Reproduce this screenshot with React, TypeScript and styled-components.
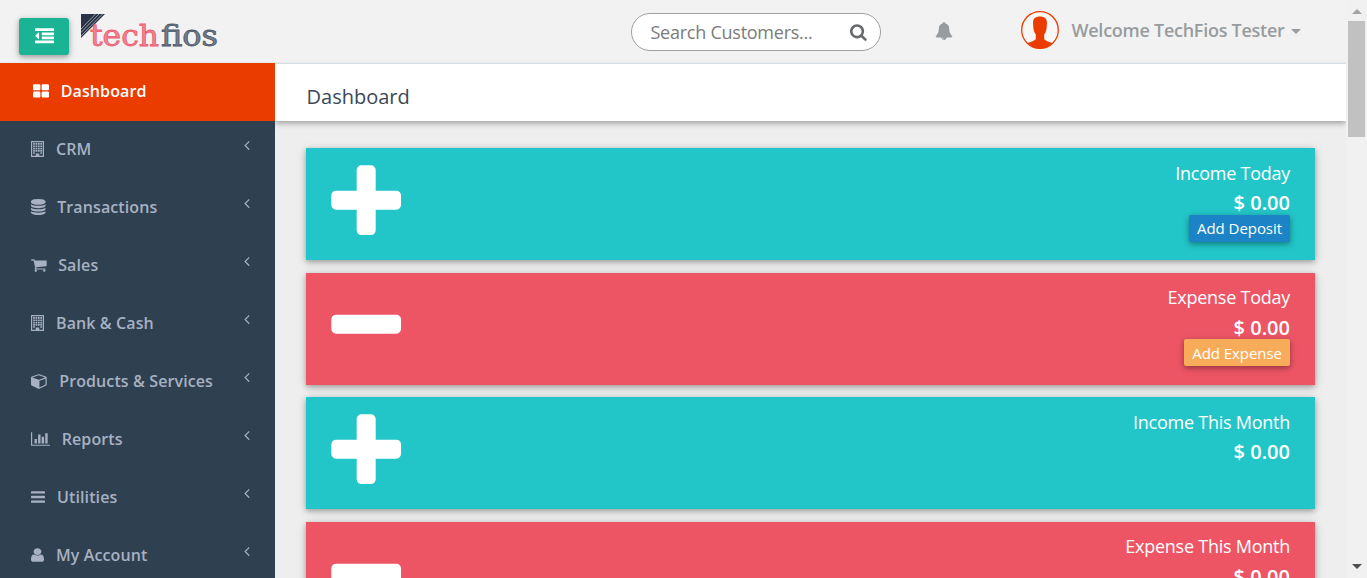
import React from "react";
import styled, { createGlobalStyle } from "styled-components";

const GlobalStyle = createGlobalStyle`
  * { box-sizing: border-box; }
  body {
    margin: 0;
    overflow: hidden;
    background: #eeeeee;
    font-family: "Open Sans", "Noto Sans", sans-serif;
  }
  button, input { font-family: inherit; }
`;

const Screen = styled.div`
  display: flex;
  width: 1367px;
  height: 578px;
  overflow: hidden;
`;

const Page = styled.div`
  display: flex;
  flex-direction: column;
  width: 1346px;
  height: 578px;
`;

const Header = styled.header`
  display: flex;
  align-items: flex-start;
  flex: none;
  height: 63px;
  border-bottom: 1px solid #e7ebed;
  background: #f2f2f2;
`;

const ToggleButton = styled.button`
  display: flex;
  align-items: center;
  justify-content: center;
  width: 50px;
  height: 37px;
  margin: 18px 0 0 19px;
  padding: 0;
  border: 0;
  border-radius: 3px;
  background: #1ab394;
  color: #fff;
  box-shadow: 0 2px 5px rgba(0, 0, 0, 0.26), 0 2px 8px rgba(0, 0, 0, 0.14);
`;

const Logo = styled.svg`
  flex: none;
  width: 140px;
  height: 40px;
  margin: 12px 0 0 11px;
`;

const SearchBox = styled.label`
  display: flex;
  align-items: center;
  width: 250px;
  height: 38px;
  margin: 13px 0 0 411px;
  padding: 0 13px 0 18.5px;
  border: 1px solid #a0a0a0;
  border-radius: 19px;
  background: #fff;
  color: #676a6c;
`;

const SearchInput = styled.input`
  flex: 1;
  min-width: 0;
  padding: 0;
  border: 0;
  outline: 0;
  background: transparent;
  font-size: 18px;
  letter-spacing: -0.25px;
  &::placeholder { color: #7b7b7b; opacity: 1; }
`;

const BellSlot = styled.div`
  display: flex;
  margin: 22px 0 0 54px;
  color: #999c9e;
`;

const Avatar = styled.svg`
  width: 38px;
  height: 38px;
  margin: 11px 0 0 68px;
`;

const Welcome = styled.div`
  display: flex;
  align-items: center;
  gap: 6px;
  height: 24px;
  margin: 18px 0 0 12.5px;
  color: #999c9e;
  font-size: 18px;
  font-weight: 600;
  letter-spacing: -0.26px;
  white-space: nowrap;
`;

const Caret = styled.span`
  margin-top: 2px;
  border-top: 5px solid #999c9e;
  border-left: 5px solid transparent;
  border-right: 5px solid transparent;
`;

const Body = styled.div`
  display: flex;
  flex: 1;
  min-height: 0;
`;

const Sidebar = styled.nav`
  flex: none;
  width: 275px;
  background: #2f4050;
`;

const MenuItem = styled.a<{ $active?: boolean }>`
  display: flex;
  align-items: center;
  height: 58px;
  padding: 0 25px 2px ${(p) => (p.$active ? 33 : 31)}px;
  background: ${(p) => (p.$active ? "#eb3c00" : "transparent")};
  color: ${(p) => (p.$active ? "#fff" : "#a7b1c2")};
  font-size: 16px;
  font-weight: 600;
  letter-spacing: 0.11px;
  white-space: nowrap;
`;

const MenuText = styled.span<{ $gap: number }>`
  flex: 1;
  margin-left: ${(p) => p.$gap}px;
`;

const Arrow = styled.span`
  display: flex;
  padding-bottom: 7.5px;
`;

const Main = styled.main`
  display: flex;
  flex: 1;
  flex-direction: column;
  min-width: 0;
  background: #eeeeee;
  overflow: hidden;
`;

const TitleBar = styled.div`
  flex: none;
  height: 58px;
  padding: 20px 31.5px 0;
  border-top: 1px solid #d8dfe3;
  background: #fff;
  box-shadow: 0 2px 6px rgba(0, 0, 0, 0.36);
`;

const Title = styled.h1`
  margin: 0;
  color: #3b4757;
  font-size: 20px;
  font-weight: 400;
  line-height: 26px;
`;

const Cards = styled.div`
  display: flex;
  flex-direction: column;
  gap: 12.5px;
  padding: 27px 31px 0;
`;

const Card = styled.section<{ $tone: string }>`
  display: flex;
  justify-content: space-between;
  flex: none;
  height: 112px;
  padding: 10.8px 25px 0 19px;
  background: ${(p) => p.$tone};
  color: #fff;
  box-shadow: 0 2px 5px rgba(0, 0, 0, 0.26), 0 2px 10px rgba(0, 0, 0, 0.14);
`;

const Figures = styled.div`
  display: flex;
  flex-direction: column;
  align-items: flex-end;
  padding-top: 1px;
`;

const CardLabel = styled.span`
  font-size: 18px;
  line-height: 26px;
  letter-spacing: -0.25px;
`;

const Amount = styled.strong`
  margin-top: 4.6px;
  font-size: 20px;
  font-weight: 600;
  line-height: 26px;
`;

const CardButton = styled.button<{ $tone: string }>`
  height: 27px;
  margin-top: -1.6px;
  padding: 0.6px 8px 0;
  border: 0;
  border-radius: 2px;
  background: ${(p) => p.$tone};
  color: #fff;
  font-size: 15px;
  line-height: 26.4px;
  letter-spacing: -0.05px;
  box-shadow: 0 2px 5px rgba(0, 0, 0, 0.26), 0 2px 8px rgba(0, 0, 0, 0.16);
`;

const ScrollTrack = styled.div`
  display: flex;
  flex-direction: column;
  align-items: center;
  width: 21px;
  height: 578px;
  background: #f1f1f1;
`;

const ScrollArrow = styled.span<{ $down?: boolean }>`
  border-left: 5px solid transparent;
  border-right: 5px solid transparent;
  ${(p) =>
    p.$down
      ? "margin-top: auto; margin-bottom: 9px; border-top: 5px solid #505050;"
      : "margin-top: 9px; border-bottom: 5px solid #a3a3a3;"}
`;

const ScrollThumb = styled.span`
  width: 17px;
  height: 116px;
  margin-top: 7px;
  background: #c1c1c1;
`;

type Glyph = { x?: number; w: number; d: string };

const glyphs: Record<string, Glyph> = {
  dedent: {
    w: 1792,
    d: "M384 544v576q0 13-9.500 22.500t-22.500 9.500q-14 0-23-9l-288-288q-9-9-9-23t9-23l288-288q9-9 23-9 13 0 22.500 9.500t9.500 22.500zM32 1280h1728q32 0 32 32v192q0 32-32 32h-1728q-32 0-32-32v-192q0-32 32-32zM672 896h1088q32 0 32 32v192q0 32-32 32h-1088q-32 0-32-32v-192q0-32 32-32zM672 512h1088q32 0 32 32v192q0 32-32 32h-1088q-32 0-32-32v-192q0-32 32-32zM32 128h1728q32 0 32 32v192q0 32-32 32h-1728q-32 0-32-32v-192q0-32 32-32z",
  },
  grid: {
    x: 64,
    w: 1664,
    d: "M832 1024v384q0 52-38 90t-90 38h-512q-52 0-90-38t-38-90v-384q0-52 38-90t90-38h512q52 0 90 38t38 90zm0-768v384q0 52-38 90t-90 38h-512q-52 0-90-38t-38-90v-384q0-52 38-90t90-38h512q52 0 90 38t38 90zm896 768v384q0 52-38 90t-90 38h-512q-52 0-90-38t-38-90v-384q0-52 38-90t90-38h512q52 0 90 38t38 90zm0-768v384q0 52-38 90t-90 38h-512q-52 0-90-38t-38-90v-384q0-52 38-90t90-38h512q52 0 90 38t38 90z",
  },
  building: {
    w: 1408,
    d: "M64 0h1280q64 0 64 64v1664q0 64-64 64H64q-64 0-64-64V64Q0 0 64 0zM128 128v1536h384v-224q0-32 32-32h320q32 0 32 32v224h384V128z" +
      [230, 490, 750, 1010]
        .map((y) => [230, 490, 750, 1010].map((x) => `M${x} ${y}h190v190h-190z`).join(""))
        .join("") +
      "M230 1270h190v150h-190zM1010 1270h190v150h-190z",
  },
  database: {
    x: 128,
    w: 1536,
    d: "M896 768q237 0 443-43t325-127v170q0 69-103 128t-280 93.500-385 34.500-385-34.500-280-93.500-103-128v-170q119 84 325 127t443 43zm0 768q237 0 443-43t325-127v170q0 69-103 128t-280 93.500-385 34.500-385-34.500-280-93.500-103-128v-170q119 84 325 127t443 43zm0-384q237 0 443-43t325-127v170q0 69-103 128t-280 93.500-385 34.500-385-34.500-280-93.500-103-128v-170q119 84 325 127t443 43zm0-1152q208 0 385 34.500t280 93.500 103 128v128q0 69-103 128t-280 93.500-385 34.500-385-34.500-280-93.500-103-128v-128q0-69 103-128t280-93.500 385-34.500z",
  },
  cart: {
    x: 64,
    w: 1664,
    d: "M704 1536q0 52-38 90t-90 38-90-38-38-90 38-90 90-38 90 38 38 90zm896 0q0 52-38 90t-90 38-90-38-38-90 38-90 90-38 90 38 38 90zm128-1088v512q0 24-16.500 42.500t-40.500 21.500l-1044 122q13 60 13 70 0 16-24 64h920q26 0 45 19t19 45-19 45-45 19h-1024q-26 0-45-19t-19-45q0-11 8-31.500t16-36 21.500-40 15.500-29.500l-177-823h-204q-26 0-45-19t-19-45 19-45 45-19h256q16 0 28.500 6.500t19.500 15.500 13 24.500 8 26 5.500 29.500 4.500 26h1201q26 0 45 19t19 45z",
  },
  cube: {
    w: 1664,
    d: "M896 1629l640-349v-636l-640 233v752zm-64-865l698-254-698-254-698 254zm832-252v768q0 35-18 65t-49 47l-704 384q-28 16-61 16t-61-16l-704-384q-31-17-49-47t-18-65v-768q0-40 23-73t61-47l704-256q22-8 44-8t44 8l704 256q38 14 61 47t23 73z",
  },
  chart: {
    w: 2048,
    d: "M640 896v512h-256v-512h256zm384-512v1024h-256v-1024h256zm1024 1152v128h-2048v-1536h128v1408h1920zm-640-896v768h-256v-768h256zm384-384v1152h-256v-1152h256z",
  },
  lines: {
    w: 1536,
    d: "M64 256h1408q64 0 64 64v128q0 64-64 64H64q-64 0-64-64V320q0-64 64-64zM64 768h1408q64 0 64 64v128q0 64-64 64H64q-64 0-64-64V832q0-64 64-64zM64 1280h1408q64 0 64 64v128q0 64-64 64H64q-64 0-64-64v-128q0-64 64-64z",
  },
  user: {
    x: 256,
    w: 1280,
    d: "M1536 1399q0 109-62.500 187t-150.500 78h-854q-88 0-150.500-78t-62.500-187q0-85 8.500-160.500t31.500-152 58.500-131 94-89 134.500-34.500q131 128 313 128t313-128q76 0 134.500 34.500t94 89 58.500 131 31.500 152 8.500 160.500zm-256-887q0 159-112.500 271.500t-271.500 112.500-271.500-112.500-112.500-271.500 112.500-271.500 271.500-112.500 271.500 112.500 112.500 271.500z",
  },
  search: {
    x: 64,
    w: 1664,
    d: "M1216 832q0-185-131.500-316.500t-316.500-131.500-316.500 131.500-131.500 316.500 131.500 316.500 316.500 131.500 316.500-131.500 131.500-316.500zm512 832q0 52-38 90t-90 38q-54 0-90-38l-343-342q-179 124-399 124-143 0-273.500-55.500t-225-150-150-225-55.500-273.500 55.500-273.500 150-225 225-150 273.500-55.500 273.500 55.500 225 150 150 225 55.500 273.500q0 220-124 399l343 343q37 37 37 90z",
  },
  bell: {
    w: 1792,
    d: "M912 1696q0-16-16-16-59 0-101.500-42.500t-42.500-101.500q0-16-16-16t-16 16q0 73 51.500 124.500t124.500 51.500q16 0 16-16zm816-288q0 52-38 90t-90 38h-448q0 106-75 181t-181 75-181-75-75-181h-448q-52 0-90-38t-38-90q50-42 91-88t85-119.500 74.500-158.500 50-206 19.500-260q0-152 117-282.500t307-158.500q-8-19-8-39 0-40 28-68t68-28 68 28 28 68q0 20-8 39 190 28 307 158.500t117 282.500q0 139 19.500 260t50 206 74.500 158.500 85 119.500 91 88z",
  },
  plus: {
    x: 64,
    w: 1664,
    d: "M1600 736v192q0 40-28 68t-68 28h-416v416q0 40-28 68t-68 28h-192q-40 0-68-28t-28-68v-416h-416q-40 0-68-28t-28-68v-192q0-40 28-68t68-28h416v-416q0-40 28-68t68-28h192q40 0 68 28t28 68v416h416q40 0 68 28t28 68z",
  },
  minus: {
    x: 64,
    w: 1664,
    d: "M1600 736v192q0 40-28 68t-68 28h-1216q-40 0-68-28t-28-68v-192q0-40 28-68t68-28h1216q40 0 68 28t28 68z",
  },
  angle: {
    x: 576,
    w: 640,
    d: "M1203 544q0 13-10 23l-393 393 393 393q10 10 10 23t-10 23l-50 50q-10 10-23 10t-23-10l-466-466q-10-10-10-23t10-23l466-466q10-10 23-10t23 10l50 50q10 10 10 23z",
  },
};

const Icon = ({ name, size, width }: { name: string; size: number; width?: number }) => {
  const g = glyphs[name];
  return (
    <svg
      width={width ?? (g.w / 1792) * size}
      height={size}
      viewBox={`${g.x ?? 0} 0 ${g.w} 1792`}
      preserveAspectRatio="none"
      fill="currentColor"
      fillRule={name === "building" ? "evenodd" : "nonzero"}
    >
      <path d={g.d} />
    </svg>
  );
};

const menu = [
  { label: "Dashboard", icon: "grid", width: 16, size: 17, gap: 11.7, active: true },
  { label: "CRM", icon: "building", width: 13, gap: 12 },
  { label: "Transactions", icon: "database", width: 14.5, gap: 11.7 },
  { label: "Sales", icon: "cart", width: 15.7, gap: 11.5 },
  { label: "Bank & Cash", icon: "building", width: 13, gap: 12 },
  { label: "Products & Services", icon: "cube", width: 15.7, gap: 12.5 },
  { label: "Reports", icon: "chart", width: 19, gap: 11.7 },
  { label: "Utilities", icon: "lines", width: 14, gap: 12 },
  { label: "My Account", icon: "user", width: 13, gap: 12 },
];

const TEAL = "#23c6c8";
const RED = "#ed5565";

const cards = [
  { label: "Income Today", icon: "plus", tone: TEAL, button: "Add Deposit", buttonTone: "#1c84c6" },
  { label: "Expense Today", icon: "minus", tone: RED, button: "Add Expense", buttonTone: "#f8ac59" },
  { label: "Income This Month", icon: "plus", tone: TEAL },
  { label: "Expense This Month", icon: "minus", tone: RED },
];

export default function App() {
  return (
    <Screen>
      <GlobalStyle />
      <Page>
        <Header>
          <ToggleButton aria-label="Toggle menu">
            <Icon name="dedent" size={19} />
          </ToggleButton>
          <Logo viewBox="0 0 140 40">
            <path d="M1 2H25L1 26z" fill="#2b3446" />
            <path d="M22.500 2L1 24M19 2L1 20.500M15.500 2L1 17" stroke="#aeb3bb" strokeWidth="0.8" />
            <g fontFamily="DejaVu Serif, serif" fontSize="29.500" strokeWidth="0.8">
              <text x="10" y="33.500" textLength="69" lengthAdjust="spacingAndGlyphs" fill="#f18491" stroke="#ee5a6e">tech</text>
              <text x="81" y="33.500" textLength="57" lengthAdjust="spacingAndGlyphs" fill="#747d8b" stroke="#4c5566">fios</text>
            </g>
          </Logo>
          <SearchBox>
            <SearchInput placeholder="Search Customers..." />
            <Icon name="search" size={18} />
          </SearchBox>
          <BellSlot>
            <Icon name="bell" size={18} />
          </BellSlot>
          <Avatar viewBox="0 0 38 38">
            <circle cx="19" cy="19" r="18.300" fill="#f7f7f7" stroke="#eb3c00" strokeWidth="1.300" />
            <path
              d="M19 5.500c4.500 0 7 2 7 6.500l-.4 5c-.2 3-1.200 5-2.400 6.500v4c0 2 3.500 2.800 8.300 4.600A18.300 18.300 0 0 1 19 37.500 18.300 18.300 0 0 1 6.500 32.100c4.800-1.800 8.300-2.600 8.300-4.600v-4c-1.200-1.500-2.200-3.500-2.400-6.500L12 12c0-4.500 2.500-6.500 7-6.500z"
              fill="#eb3c00"
            />
          </Avatar>
          <Welcome>
            Welcome TechFios Tester
            <Caret />
          </Welcome>
        </Header>
        <Body>
          <Sidebar>
            {menu.map((item) => (
              <MenuItem key={item.label} $active={item.active}>
                <Icon name={item.icon} size={item.size ?? 16} width={item.width} />
                <MenuText $gap={item.gap}>{item.label}</MenuText>
                {!item.active && (
                  <Arrow>
                    <Icon name="angle" size={16} />
                  </Arrow>
                )}
              </MenuItem>
            ))}
          </Sidebar>
          <Main>
            <TitleBar>
              <Title>Dashboard</Title>
            </TitleBar>
            <Cards>
              {cards.map((card) => (
                <Card key={card.label} $tone={card.tone}>
                  <Icon name={card.icon} size={88.7} />
                  <Figures>
                    <CardLabel>{card.label}</CardLabel>
                    <Amount>$ 0.00</Amount>
                    {card.button && <CardButton $tone={card.buttonTone}>{card.button}</CardButton>}
                  </Figures>
                </Card>
              ))}
            </Cards>
          </Main>
        </Body>
      </Page>
      <ScrollTrack>
        <ScrollArrow />
        <ScrollThumb />
        <ScrollArrow $down />
      </ScrollTrack>
    </Screen>
  );
}
